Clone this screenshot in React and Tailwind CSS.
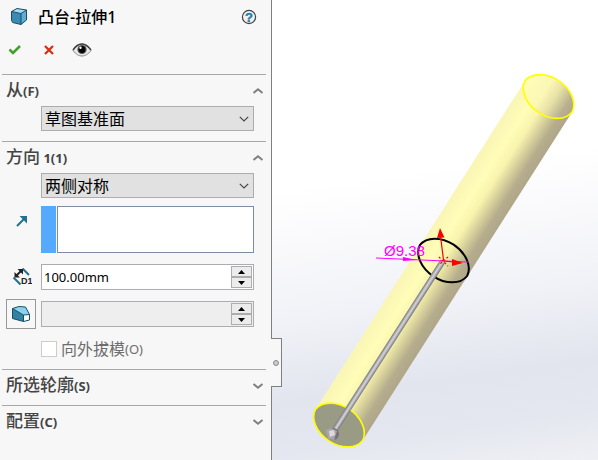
import React, { useState } from 'react';

function ChevronIcon({ open }) {
  return (
    <svg width="12" height="8" viewBox="0 0 12 8" className="block">
      <path d={open ? 'M1.5 6 6 2.2 10.5 6' : 'M1.5 2 6 5.8 10.5 2'} fill="none" stroke="#808080" strokeWidth="2" />
    </svg>
  );
}

function BossIcon() {
  return (
    <svg width="18" height="20" viewBox="0 0 18 20">
      <path d="M1.5 4.5 11 6.5V17.5L3 15.5 1.5 13Z" fill="#3a8bb3" />
      <path d="M11 6.5 16.5 3V13L11 17.5Z" fill="#5fadd2" />
      <path d="M1.5 4.5 7 1.5 16.5 3 11 6.5Z" fill="#a5dcf3" />
      <path d="M1.5 4.5 7 1.5 16.5 3V13L11 17.5 2.5 15.5 1.5 13Z M11 6.5V17.5 M1.5 4.5 11 6.5 16.5 3" fill="none" stroke="#184b68" strokeWidth="1" strokeLinejoin="round" />
    </svg>
  );
}

function CheckIcon() {
  return (
    <svg width="14" height="12" viewBox="0 0 14 12">
      <path d="M1.5 5.5 5 9 12 2" fill="none" stroke="#3fa22b" strokeWidth="2.6" />
    </svg>
  );
}

function CrossIcon() {
  return (
    <svg width="10" height="10" viewBox="0 0 10 10">
      <path d="M1 1 9 9M9 1 1 9" fill="none" stroke="#dc2a0c" strokeWidth="2.2" />
    </svg>
  );
}

function EyeIcon() {
  return (
    <svg width="20" height="14" viewBox="0 0 20 14">
      <path d="M1 7.5C4 2.5 7 1 10 1s6 2 9 6.5C16 11.5 13 13 10 13S4 11.5 1 7.5Z" fill="#e8e8e8" stroke="#8a8a8a" strokeWidth="1" />
      <path d="M1 7C4 2.5 7 1 10 1s6 2 9 6" fill="none" stroke="#3c3c3c" strokeWidth="1.4" />
      <circle cx="10" cy="6.5" r="4.6" fill="#555" />
      <circle cx="10" cy="6.5" r="3.4" fill="#050505" />
      <circle cx="8.5" cy="4.8" r="1.2" fill="#fff" />
    </svg>
  );
}

function HelpIcon() {
  return (
    <svg width="16" height="16" viewBox="0 0 16 16">
      <circle cx="8" cy="8" r="6.6" fill="#f2f2f2" stroke="#444" strokeWidth="1.2" />
      <text x="8" y="12.5" textAnchor="middle" fontSize="13" fontWeight="700" fill="#2382a8" stroke="#2382a8" strokeWidth="0.4" fontFamily="'Liberation Sans', sans-serif">
        ?
      </text>
    </svg>
  );
}

function ArrowIcon() {
  return (
    <svg width="12" height="12" viewBox="0 0 12 12">
      <path d="M1 11 8 4" stroke="#23708f" strokeWidth="2" />
      <path d="M3.5 1H11V8.5Z" fill="#23708f" />
    </svg>
  );
}

function DepthIcon() {
  return (
    <svg width="20" height="20" viewBox="0 0 20 20">
      <path d="M1.5 10.5 8.5 17.5M10.5 1.5 17 8" stroke="#23708f" strokeWidth="2" />
      <path d="M4 9 10 3" stroke="#222" strokeWidth="2" />
      <path d="M2.5 5V10.5H8ZM5.5 2H11V7.5Z" fill="#222" />
      <text x="9" y="17" fontSize="9" fontWeight="700" fill="#222" fontFamily="'Liberation Sans', sans-serif">
        D1
      </text>
    </svg>
  );
}

function DraftIcon() {
  return (
    <svg width="20" height="18" viewBox="0 0 20 18">
      <path d="M1.5 3.5 12.5 10V16.5L1.5 13.5Z" fill="#3282a8" />
      <path d="M1.5 3.5 8 1.5 14.5 2 18.5 9.5 12.5 10Z" fill="#8bd2ee" />
      <path d="M12.5 10 18.5 9.5V15L12.5 16.5Z" fill="#fff" />
      <path d="M1.5 3.5 8 1.5 14.5 2 18.5 9.5V15L12.5 16.5 1.5 13.5ZM1.5 3.5 12.5 10V16.5M12.5 10 18.5 9.5" fill="none" stroke="#1b4d66" strokeWidth="1" strokeLinejoin="round" />
    </svg>
  );
}

function Section({ title, hotkey, defaultOpen = false, children }) {
  const [open, setOpen] = useState(defaultOpen);

  return (
    <section className="border-t border-[#a8a8a8] ml-[2px] mr-[5px]">
      <h2>
        <button
          type="button"
          aria-expanded={open}
          onClick={() => setOpen(!open)}
          className="flex w-full items-center justify-between h-[31px] pl-1 pr-[2px] text-[17px] leading-5 font-medium text-[#444]"
        >
          <span>
            {title}
            <span className="text-[13px] font-bold">{hotkey}</span>
          </span>
          <ChevronIcon open={open} />
        </button>
      </h2>
      {open && children}
    </section>
  );
}

function Dropdown({ label, options }) {
  return (
    <div className="relative ml-[39px] mr-3">
      <select
        aria-label={label}
        className="block w-full h-[25px] appearance-none border border-[#adadad] bg-[#e1e1e1] pl-[3px] pr-6 text-[16px] leading-5 text-black"
      >
        {options.map((o) => (
          <option key={o}>{o}</option>
        ))}
      </select>
      <svg width="10" height="6" viewBox="0 0 10 6" className="pointer-events-none absolute right-[5px] top-[10px]">
        <path d="M.8.8 5 5 9.2.8" fill="none" stroke="#444" strokeWidth="1.2" />
      </svg>
    </div>
  );
}

function SpinBox({ label, value, disabled }) {
  return (
    <div className={`flex min-w-0 flex-1 h-[26px] border border-[#abadb3] p-px ${disabled ? 'bg-[#eee]' : 'bg-white'}`}>
      <input
        type="text"
        aria-label={label}
        defaultValue={value}
        disabled={disabled}
        className="min-w-0 flex-1 pl-px text-[13px] leading-5 text-black"
      />
      <div className="flex w-[21px] shrink-0 flex-col">
        {['M3.5 0 7 4H0Z', 'M0 0H7L3.5 4Z'].map((d, i) => (
          <button
            key={d}
            type="button"
            disabled={disabled}
            aria-label={i === 0 ? 'Increase' : 'Decrease'}
            className="flex flex-1 items-center justify-center border border-[#adadad] bg-[#ececec]"
          >
            <svg width="7" height="4" viewBox="0 0 7 4">
              <path d={d} fill="#000" />
            </svg>
          </button>
        ))}
      </div>
    </div>
  );
}

function PropertyPanel() {
  return (
    <aside className="relative w-[272px] shrink-0 border-r border-[#808080] bg-[#f7f7f7]">
      <header className="h-[74px]">
        <div className="flex h-[34px] items-center pl-[10px] pr-[14px]">
          <BossIcon />
          <h1 className="ml-[10px] flex-1 text-[16px] leading-5 font-medium text-black">凸台-拉伸1</h1>
          <button type="button" aria-label="Help">
            <HelpIcon />
          </button>
        </div>
        <div className="flex h-8 items-center pl-2">
          <button type="button" aria-label="OK">
            <CheckIcon />
          </button>
          <button type="button" aria-label="Cancel" className="ml-[22px]">
            <CrossIcon />
          </button>
          <button type="button" aria-label="Preview" className="ml-[18px]">
            <EyeIcon />
          </button>
        </div>
      </header>

      <Section title="从" hotkey="(F)" defaultOpen>
        <div className="pb-[10px]">
          <Dropdown label="从" options={['草图基准面', '曲面/面/基准面', '顶点', '等距']} />
        </div>
      </Section>

      <Section title="方向" hotkey=" 1(1)" defaultOpen>
        <Dropdown label="方向 1" options={['两侧对称', '给定深度', '完全贯穿']} />

        <div className="mt-2 mr-3 flex">
          <div className="flex w-[39px] shrink-0 justify-center pt-[9px]">
            <ArrowIcon />
          </div>
          <div className="w-[15px] shrink-0 bg-[#55aaff]" />
          <textarea aria-label="拉伸方向" className="ml-px h-[47px] min-w-0 flex-1 resize-none border border-[#828ba5] bg-white" />
        </div>

        <div className="mt-[11px] mr-3 flex items-center">
          <div className="flex w-[39px] shrink-0 justify-center">
            <DepthIcon />
          </div>
          <SpinBox label="深度" value="100.00mm" />
        </div>

        <div className="mt-[9px] mr-3 flex items-center">
          <div className="w-[39px] shrink-0 pl-1">
            <button type="button" aria-label="拔模开/关" className="flex h-[30px] w-[30px] items-center justify-center border border-[#999]">
              <DraftIcon />
            </button>
          </div>
          <SpinBox label="拔模角度" disabled />
        </div>

        <label className="mt-[10px] mb-[10px] ml-[39px] flex h-5 items-center text-[16px] leading-5 text-[#6d6d6d]">
          <input type="checkbox" disabled className="mr-1 size-4 appearance-none border border-[#ccc] bg-white" />
          向外拔模<span className="text-[13px]">(O)</span>
        </label>
      </Section>

      <Section title="所选轮廓" hotkey="(S)" />
      <div className="h-1" />
      <Section title="配置" hotkey="(C)" />

      {/* splitter handle that sticks out over the viewport */}
      <div className="absolute left-full top-[338px] flex h-[49px] w-[11px] items-center justify-center border border-l-0 border-[#808080] bg-[#f7f7f7]">
        <span className="size-[6px] rounded-full border border-[#888] bg-[#ccc]" />
      </div>
    </aside>
  );
}

function Viewport() {
  return (
    <main className="min-w-0 flex-1 bg-[linear-gradient(172deg,#fff_38%,#f1f2f7_64%,#e2e5ee_80%,#e4e7ef_90%,#eef0f4_100%)]">
      <svg viewBox="272 0 326 460" className="block h-full w-full" role="img" aria-label="Extrude preview">
        <defs>
          <linearGradient id="body" gradientUnits="userSpaceOnUse" x1="419.7" y1="245.3" x2="467.3" y2="275.7">
            <stop offset="0" stopColor="#f9f5b6" />
            <stop offset="0.3" stopColor="#fffdb8" />
            <stop offset="0.5" stopColor="#f8f4ae" />
            <stop offset="0.7" stopColor="#d2cb99" />
            <stop offset="0.85" stopColor="#b5ad8c" />
            <stop offset="1" stopColor="#b0a78a" />
          </linearGradient>
          <linearGradient id="cap" gradientUnits="userSpaceOnUse" x1="525" y1="81" x2="572" y2="112">
            <stop offset="0" stopColor="#fffdb8" />
            <stop offset="0.4" stopColor="#fbf7b4" />
            <stop offset="0.6" stopColor="#e8e2a8" />
            <stop offset="0.85" stopColor="#b9b18e" />
            <stop offset="1" stopColor="#b0a78a" />
          </linearGradient>
          <linearGradient id="rod" gradientUnits="userSpaceOnUse" x1="386" y1="345.4" x2="391" y2="348.6">
            <stop offset="0" stopColor="#85858b" />
            <stop offset="0.4" stopColor="#d6d6da" />
            <stop offset="0.65" stopColor="#aaaab0" />
            <stop offset="1" stopColor="#5c555c" />
          </linearGradient>
        </defs>

        {/* extruded body with its two end faces */}
        <path d="M315.4 409.5 524.9 81 572.1 112 362.6 440.5Z" fill="url(#body)" />
        <g strokeWidth="1.6" stroke="#ffff00">
          <path d="M524.9 81A28.3 20.1 34 0 1 572.1 112A28.3 20.1 34 0 1 524.9 81Z" fill="url(#cap)" />
          <path d="M315.4 409.5A28.3 20.1 34 0 1 362.6 440.5A28.3 20.1 34 0 1 315.4 409.5Z" fill="#999b85" />
        </g>

        {/* sketch circle and drag handle */}
        <path d="M419.9 245A28.3 20.1 34 0 1 467.1 276A28.3 20.1 34 0 1 419.9 245Z" fill="none" stroke="#000" strokeWidth="2" />
        <path d="M443 261 334 431" stroke="url(#rod)" strokeWidth="6" />
        <circle cx="333" cy="434" r="6" fill="#77717a" />
        <path d="M326 430 331 428 337 431 334 440 328 439Z" fill="#aaa5ac" />
        <path d="M329 431 334 430 335 435 330 437Z" fill="#ddd9de" />

        {/* diameter dimension */}
        <g fill="#ff00ff" stroke="#ff00ff">
          <path d="M376 258 468 262" fill="none" strokeWidth="1" />
          <path d="M403 257 417 260 403 261Z" stroke="none" />
          <text x="384" y="256" fontSize="15" stroke="none" fontFamily="'Liberation Sans', sans-serif">
            Ø9.38
          </text>
        </g>

        {/* origin triad */}
        <g stroke="#ff0000" fill="#ff0000" strokeWidth="1.2">
          <path d="M443.5 260 440.5 236M444 261 453 262" />
          <path d="M440 228 444.5 237.5 437 238ZM452 259 463 263 452 266Z" stroke="none" />
          <path d="M439 257 448 266M448 257 440 264" strokeDasharray="2 2" />
        </g>
      </svg>
    </main>
  );
}

export default function App() {
  return (
    <div className="flex min-h-screen font-['Noto_Sans','Noto_Sans_CJK_SC',sans-serif]">
      <PropertyPanel />
      <Viewport />
    </div>
  );
}
